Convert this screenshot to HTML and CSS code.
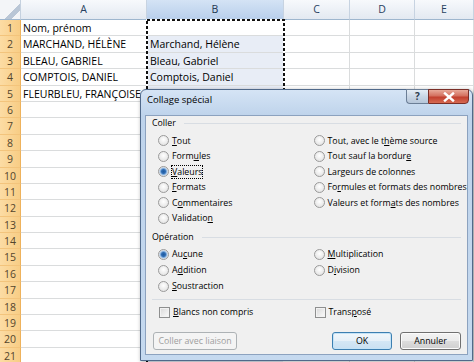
FILE: index.html
```html
<!DOCTYPE html>
<html lang="fr">
<head>
<meta charset="UTF-8">
<title>Collage spécial</title>
<link rel="stylesheet" href="styles.css">
</head>
<body>
    <!-- Feuille de calcul -->
    <div class="sheet">
        <div class="corner"></div><div class="col-head">A</div><div class="col-head sel">B</div><div class="col-head">C</div><div class="col-head">D</div><div class="col-head">E</div>
        <div class="row-head">1</div><div class="cell">Nom, prénom</div><div class="cell b active"></div><div class="cell"></div><div class="cell"></div><div class="cell"></div>
        <div class="row-head">2</div><div class="cell">MARCHAND, HÉLÈNE</div><div class="cell b">Marchand, Hélène</div><div class="cell"></div><div class="cell"></div><div class="cell"></div>
        <div class="row-head">3</div><div class="cell">BLEAU, GABRIEL</div><div class="cell b">Bleau, Gabriel</div><div class="cell"></div><div class="cell"></div><div class="cell"></div>
        <div class="row-head">4</div><div class="cell">COMPTOIS, DANIEL</div><div class="cell b">Comptois, Daniel</div><div class="cell"></div><div class="cell"></div><div class="cell"></div>
        <div class="row-head">5</div><div class="cell">FLEURBLEU, FRANÇOISE</div><div class="cell b"></div><div class="cell"></div><div class="cell"></div><div class="cell"></div>
        <div class="row-head">6</div><div class="cell"></div><div class="cell b"></div><div class="cell"></div><div class="cell"></div><div class="cell"></div>
        <div class="row-head">7</div><div class="cell"></div><div class="cell b"></div><div class="cell"></div><div class="cell"></div><div class="cell"></div>
        <div class="row-head">8</div><div class="cell"></div><div class="cell b"></div><div class="cell"></div><div class="cell"></div><div class="cell"></div>
        <div class="row-head">9</div><div class="cell"></div><div class="cell b"></div><div class="cell"></div><div class="cell"></div><div class="cell"></div>
        <div class="row-head">10</div><div class="cell"></div><div class="cell b"></div><div class="cell"></div><div class="cell"></div><div class="cell"></div>
        <div class="row-head">11</div><div class="cell"></div><div class="cell b"></div><div class="cell"></div><div class="cell"></div><div class="cell"></div>
        <div class="row-head">12</div><div class="cell"></div><div class="cell b"></div><div class="cell"></div><div class="cell"></div><div class="cell"></div>
        <div class="row-head">13</div><div class="cell"></div><div class="cell b"></div><div class="cell"></div><div class="cell"></div><div class="cell"></div>
        <div class="row-head">14</div><div class="cell"></div><div class="cell b"></div><div class="cell"></div><div class="cell"></div><div class="cell"></div>
        <div class="row-head">15</div><div class="cell"></div><div class="cell b"></div><div class="cell"></div><div class="cell"></div><div class="cell"></div>
        <div class="row-head">16</div><div class="cell"></div><div class="cell b"></div><div class="cell"></div><div class="cell"></div><div class="cell"></div>
        <div class="row-head">17</div><div class="cell"></div><div class="cell b"></div><div class="cell"></div><div class="cell"></div><div class="cell"></div>
        <div class="row-head">18</div><div class="cell"></div><div class="cell b"></div><div class="cell"></div><div class="cell"></div><div class="cell"></div>
        <div class="row-head">19</div><div class="cell"></div><div class="cell b"></div><div class="cell"></div><div class="cell"></div><div class="cell"></div>
        <div class="row-head">20</div><div class="cell"></div><div class="cell b"></div><div class="cell"></div><div class="cell"></div><div class="cell"></div>
        <div class="row-head">21</div><div class="cell"></div><div class="cell b"></div><div class="cell"></div><div class="cell"></div><div class="cell"></div>
    </div>

    <!-- Zone copiée (pointillés) -->
    <svg class="marquee" width="139" height="343" viewBox="0 0 139 343">
        <rect x="1" y="1" width="137" height="360" fill="none" stroke="#fff" stroke-width="2"/>
        <rect x="1" y="1" width="137" height="360" fill="none" stroke="#111" stroke-width="2" stroke-dasharray="3 2"/>
    </svg>

    <!-- Boîte de dialogue -->
    <div class="dialog">
        <div class="titlebar">
            <span class="title">Collage spécial</span>
            <div class="caption-buttons">
                <span class="btn-help">?</span>
                <span class="btn-close">
                    <svg width="12" height="10" viewBox="0 0 12 10"><path d="M2 1.5 L10 8.5 M10 1.5 L2 8.5" stroke="#fff" stroke-width="2.4" stroke-linecap="square"/></svg>
                </span>
            </div>
        </div>

        <div class="client">
            <div class="group-title"><span>Coller</span></div>
            <div class="options coller">
                <div class="opt"><span class="radio"></span><span><u>T</u>out</span></div>
                <div class="opt"><span class="radio"></span><span>Tout, avec le t<u>h</u>ème source</span></div>
                <div class="opt"><span class="radio"></span><span>Form<u>u</u>les</span></div>
                <div class="opt"><span class="radio"></span><span>Tout sauf la bordur<u>e</u></span></div>
                <div class="opt"><span class="radio on"></span><span class="focus"><u>V</u>aleurs</span></div>
                <div class="opt"><span class="radio"></span><span>Lar<u>g</u>eurs de colonnes</span></div>
                <div class="opt"><span class="radio"></span><span><u>F</u>ormats</span></div>
                <div class="opt"><span class="radio"></span><span>Fo<u>r</u>mules et formats des nombres</span></div>
                <div class="opt"><span class="radio"></span><span>C<u>o</u>mmentaires</span></div>
                <div class="opt"><span class="radio"></span><span>Valeurs et form<u>a</u>ts des nombres</span></div>
                <div class="opt"><span class="radio"></span><span>Validatio<u>n</u></span></div>
            </div>

            <div class="group-title second"><span>Opération</span></div>
            <div class="options operation">
                <div class="opt"><span class="radio on"></span><span>Au<u>c</u>une</span></div>
                <div class="opt"><span class="radio"></span><span><u>M</u>ultiplication</span></div>
                <div class="opt"><span class="radio"></span><span>A<u>d</u>dition</span></div>
                <div class="opt"><span class="radio"></span><span>D<u>i</u>vision</span></div>
                <div class="opt"><span class="radio"></span><span><u>S</u>oustraction</span></div>
            </div>

            <div class="separator"></div>

            <div class="options checks">
                <div class="opt"><span class="check"></span><span><u>B</u>lancs non compris</span></div>
                <div class="opt"><span class="check"></span><span>Trans<u>p</u>osé</span></div>
            </div>

            <div class="footer">
                <span class="btn disabled">Coller avec liaison</span>
                <div class="footer-right">
                    <span class="btn default">OK</span>
                    <span class="btn">Annuler</span>
                </div>
            </div>
        </div>
    </div>
</body>
</html>
```

FILE: styles.css
```css
/* General */
body {
    margin: 0;
    width: 474px;
    height: 362px;
    overflow: hidden;
    position: relative;
    background-color: #ffffff;
    font-family: "Open Sans", Arial, sans-serif;
    color: #000;
}

/* Spreadsheet grid */
.sheet {
    display: grid;
    grid-template-columns: 21px 126px 137px 66px 65px 59px;
    grid-template-rows: 20px;
    grid-auto-rows: 16.4px;
    height: 362px;
    overflow: hidden;
    font-size: 10.5px;
}

.corner,
.col-head,
.row-head,
.cell {
    box-sizing: border-box;
    overflow: hidden;
    white-space: nowrap;
}

.corner {
    background: linear-gradient(135deg, #f3f5f8 60%, #b9c6d6 60%, #b9c6d6 78%, #f3f5f8 78%);
    border-right: 1px solid #c5d1df;
    border-bottom: 1px solid #9eb6ce;
}

.col-head {
    background: linear-gradient(#f7f9fc, #e3e9f1);
    border-right: 1px solid #c7d3e1;
    border-bottom: 1px solid #9eb6ce;
    color: #27415f;
    text-align: center;
    line-height: 19px;
}

.col-head.sel {
    background: linear-gradient(#d4e3f5, #b9cfeb);
    border-bottom-color: #7d9ec6;
    color: #1d3550;
}

.row-head {
    background: linear-gradient(90deg, #fcdca4, #f8cd85);
    border-right: 1px solid #eeb25c;
    border-bottom: 1px solid #f3c47c;
    color: #54452c;
    text-align: center;
    line-height: 16px;
}

.cell {
    border-right: 1px solid #dadcdd;
    border-bottom: 1px solid #dadcdd;
    padding-left: 2px;
    line-height: 16px;
}

.cell.b {
    background-color: #e8edf6;
    padding-left: 3px;
}

.cell.b.active {
    background-color: #ffffff;
}

/* Copy marquee over column B */
.marquee {
    position: absolute;
    left: 146px;
    top: 19px;
}

/* Dialog window */
.dialog {
    position: absolute;
    left: 140px;
    top: 89px;
    width: 333px;
    height: 272px;
    box-sizing: border-box;
    border: 1px solid #50698a;
    border-radius: 6px 6px 0 0;
    background: linear-gradient(#d5e4f5, #bed3eb 26px, #c5d9ef);
    padding: 0 4px 5px 4px;
    box-shadow: 1px 1px 4px rgba(0, 0, 0, 0.35);
    display: flex;
    flex-direction: column;
    font-size: 8.8px;
}

.titlebar {
    height: 25px;
    display: flex;
    align-items: flex-start;
}

.title {
    padding: 3px 0 0 2px;
    font-size: 9.5px;
    line-height: 14px;
}

.caption-buttons {
    margin-left: auto;
    margin-top: -1px;
    margin-right: -1px;
    display: flex;
}

.btn-help {
    width: 22px;
    height: 15px;
    box-sizing: border-box;
    border: 1px solid #6b7e96;
    border-right: none;
    border-radius: 0 0 0 4px;
    background: linear-gradient(#e5edf6, #c9d6e5 50%, #b6c6d9);
    color: #2b3a4d;
    font-weight: bold;
    font-size: 10px;
    line-height: 13px;
    text-align: center;
}

.btn-close {
    width: 41px;
    height: 15px;
    box-sizing: border-box;
    border: 1px solid #7a2e27;
    border-radius: 0 0 4px 0;
    background: linear-gradient(#e8a999, #d4705f 45%, #c2402f 55%, #d66a52);
    display: flex;
    align-items: center;
    justify-content: center;
}

.client {
    flex: 1;
    border: 1px solid #8ca2bf;
    background-color: #f0f0f0;
    padding: 0 6px;
}

/* Section titles with a line */
.group-title {
    display: flex;
    align-items: center;
    height: 14px;
    line-height: 14px;
}

.group-title::after {
    content: "";
    flex: 1;
    margin-left: 8px;
    border-top: 1px solid #d8dde3;
}

.group-title.second {
    margin-top: 4px;
}

/* Options grid (radio buttons, checkboxes) */
.options {
    display: grid;
    grid-template-columns: 155.5px 1fr;
    padding-left: 6px;
}

.options.coller {
    margin-top: 3px;
    grid-auto-rows: 15.5px;
}

.options.operation {
    margin-top: 2px;
    grid-auto-rows: 16px;
}

.options.checks {
    margin-top: 4px;
    grid-auto-rows: 16px;
}

.opt {
    display: flex;
    align-items: center;
    gap: 3px;
    white-space: nowrap;
}

.radio {
    width: 11px;
    height: 11px;
    box-sizing: border-box;
    border-radius: 50%;
    border: 1px solid #9a9a9a;
    background: radial-gradient(circle at 50% 40%, #ffffff, #dcdcdc);
    flex: none;
}

.radio.on {
    background: radial-gradient(circle, #1f5a9e 0, #2f6db5 2px, #a7c8eb 3.5px, #e8e8e8 4.5px, #f7f7f7);
}

.check {
    width: 11px;
    height: 11px;
    margin-left: 1px;
    box-sizing: border-box;
    border: 1px solid #8e8f8f;
    background: linear-gradient(135deg, #d8d8d8, #fbfbfb);
    box-shadow: inset 0 0 0 1px #f2f2f2;
    flex: none;
}

.focus {
    outline: 1px dotted #000;
    outline-offset: 0;
}

.separator {
    margin-top: 5px;
    border-top: 1px solid #d8dde3;
}

/* Buttons */
.footer {
    margin-top: 12px;
    display: flex;
    justify-content: space-between;
}

.footer-right {
    display: flex;
    gap: 8px;
}

.btn {
    height: 18px;
    box-sizing: border-box;
    border: 1px solid #707070;
    border-radius: 3px;
    background: linear-gradient(#f3f3f3, #ebebeb 50%, #dddddd 50%, #cfcfcf);
    box-shadow: inset 0 0 0 1px #fbfbfb;
    display: flex;
    align-items: center;
    justify-content: center;
    width: 61px;
}

.btn.default {
    width: 60px;
    border-color: #3c7fb1;
    box-shadow: inset 0 0 0 1px #c4e3f7;
    background: linear-gradient(#f1f7fb, #e6f0f8 50%, #d4e7f5 50%, #c9e0f2);
}

.btn.disabled {
    width: 84px;
    margin-left: 1px;
    border-color: #adb2b5;
    background: #f4f4f4;
    box-shadow: none;
    color: #9e9e9e;
}
```
